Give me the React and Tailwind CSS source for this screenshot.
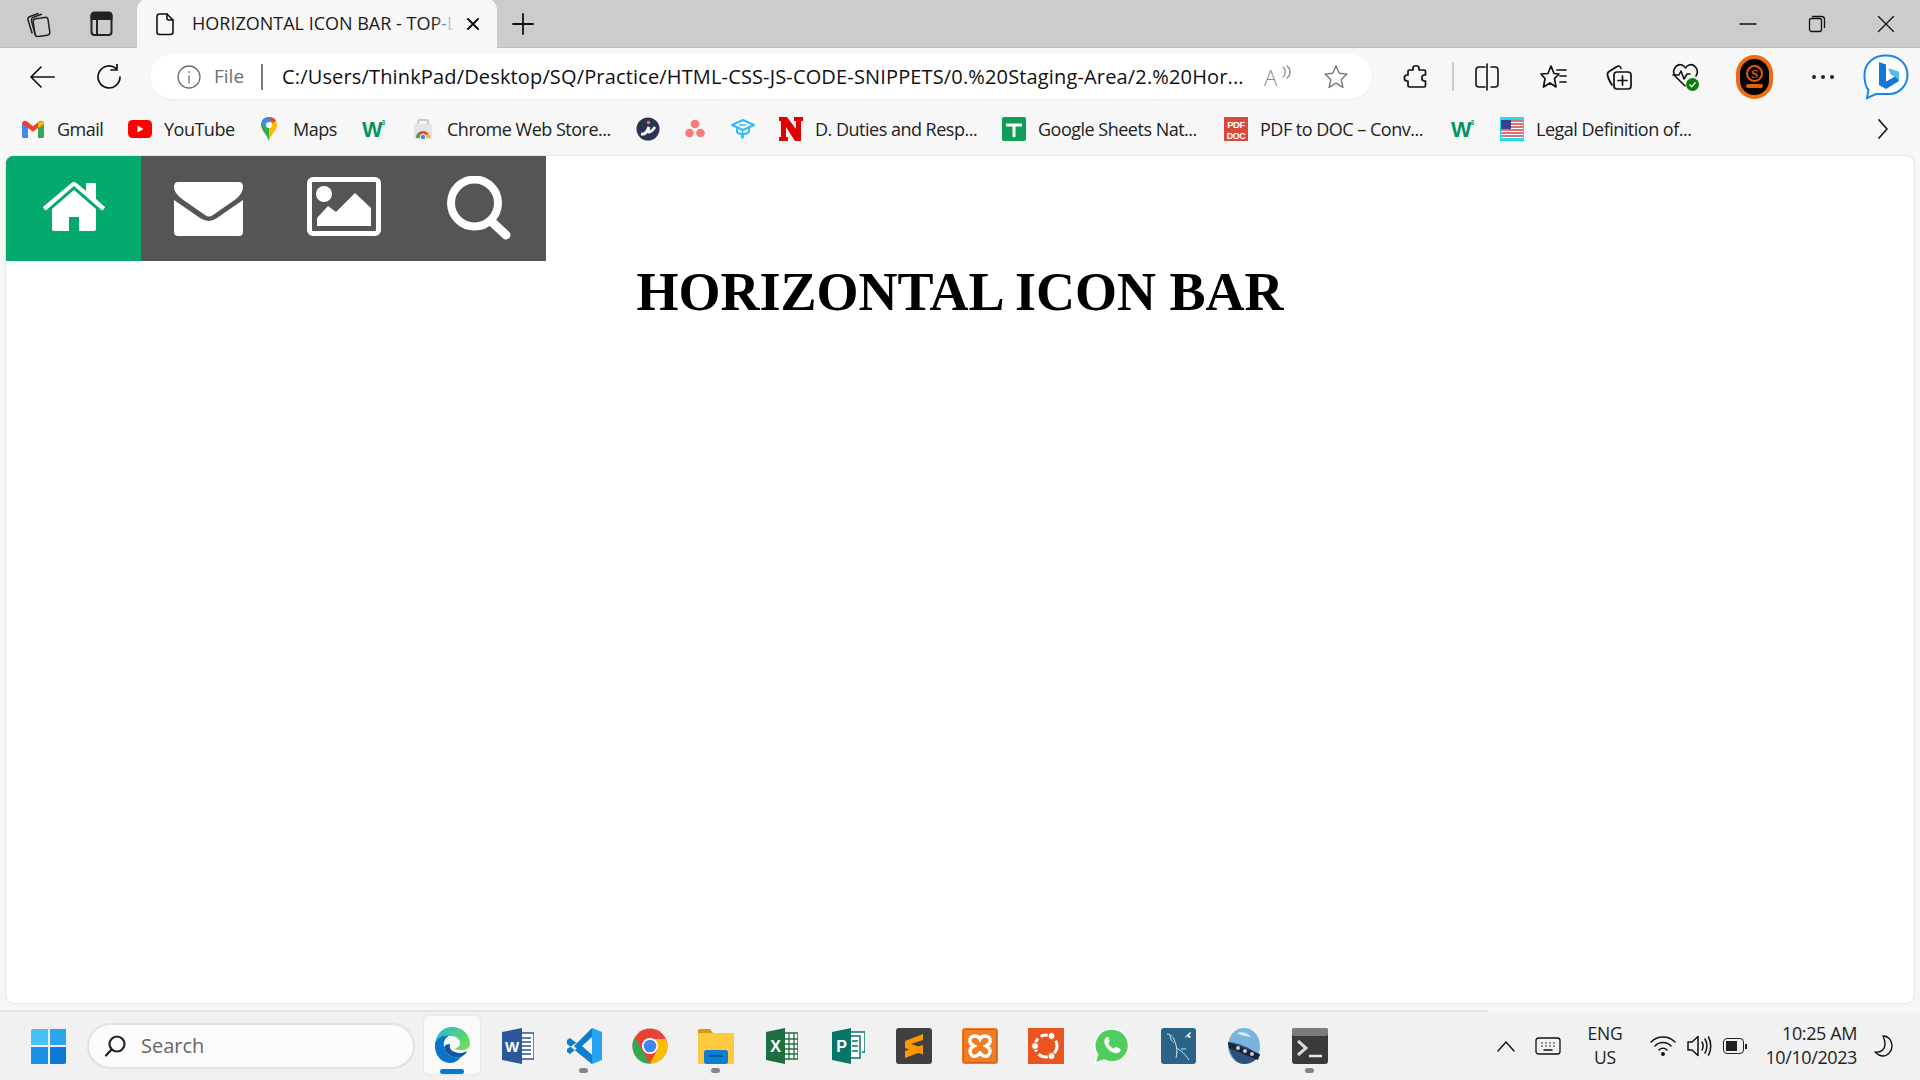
import React from "react";

const S = ({ w = 24, h = 24, vb, children, sw = 1.6, className = "" }) => (
  <svg width={w} height={h} viewBox={vb || `0 0 ${w} ${h}`} fill="none" stroke="currentColor" strokeWidth={sw} strokeLinecap="round" strokeLinejoin="round" className={"shrink-0 " + className}>
    {children}
  </svg>
);

const Logo = ({ children, vb = "0 0 24 24", w = 24, h = 24 }) => (
  <svg width={w} height={h} viewBox={vb} className="shrink-0">{children}</svg>
);

const Gmail = () => (
  <Logo>
    <path d="M1 21V6l6 4v11H2.500A1.500 1.500 0 0 1 1 19.500z" fill="#4285f4" />
    <path d="M23 21V6l-6 4v11h4.500a1.500 1.500 0 0 0 1.500-1.500z" fill="#34a853" />
    <path d="M1 7C1 4 4 3 6 4.500l6 4.800 6-4.800C20 3 23 4 23 7l-6 4-5 3.800L7 11z" fill="#ea4335" />
    <path d="M17 6 20 4 23 6 23 7 17 11z" fill="#fbbc04" />
  </Logo>
);
const YouTube = () => (
  <Logo>
    <rect x="0" y="3" width="24" height="18" rx="4.500" fill="#f00" />
    <path d="M9.500 8.500v7l6-3.500z" fill="#fff" />
  </Logo>
);
const Maps = () => (
  <Logo>
    <path d="M12 0C7 0 4 3.600 4 8c0 5 5 8 8 16z" fill="#34a853" />
    <path d="M12 0c5 0 8 3.600 8 8 0 5-5 8-8 16z" fill="#fbbc04" />
    <path d="M5 3.500C7 1 9.500 0 12 0l4 2-9 9z" fill="#4285f4" />
    <path d="M12 0c3.500 0 6 1.600 7 4l-4 2z" fill="#ea4335" />
    <circle cx="12" cy="8" r="3" fill="#fff" />
  </Logo>
);
const W3 = () => (
  <Logo>
    <text x="0" y="20" fontFamily="Liberation Sans" fontWeight="700" fontSize="22" fill="#04945f" textLength="20" lengthAdjust="spacingAndGlyphs">W</text>
    <text x="19.500" y="8" fontFamily="Liberation Sans" fontWeight="700" fontSize="6.500" fill="#04945f">3</text>
  </Logo>
);
const Store = () => (
  <Logo>
    <path d="M7 8V5a2 2 0 0 1 2-2h6a2 2 0 0 1 2 2v3" fill="none" stroke="#c8c8c8" strokeWidth="2" />
    <rect x="3" y="7" width="18" height="15" fill="#e4e4e4" />
    <path d="M5 21a7 7 0 0 1 14 0z" fill="#ea4335" />
    <path d="M5 21a7 7 0 0 1 3-5.700l4 5.700z" fill="#34a853" />
    <path d="M12 21l7 0a7 7 0 0 0-2-4.800z" fill="#fbbc04" />
    <circle cx="12" cy="20" r="2.800" fill="#4285f4" stroke="#fff" />
  </Logo>
);
const ICircle = () => (
  <Logo>
    <circle cx="12" cy="12" r="11.500" fill="#2a3352" />
    <circle cx="12.500" cy="5.500" r="1.700" fill="#ed7a4a" />
    <path d="M5 17c3 .5 5-1 6-3l2-4c-1 3-1 5 0 5 2 0 4-2 6-5" fill="none" stroke="#fff" strokeWidth="2.800" />
  </Logo>
);
const Asana = () => (
  <Logo>
    <circle cx="12" cy="7" r="4.300" fill="#fb7a78" />
    <circle cx="6.500" cy="16" r="4.300" fill="#fb7a78" />
    <circle cx="17.500" cy="16" r="4.300" fill="#fb7a78" />
  </Logo>
);
const Grad = () => (
  <Logo>
    <path d="M1 8l11-5 11 5-11 5z" fill="none" stroke="#2fbdf2" strokeWidth="2" strokeLinejoin="round" />
    <path d="M6 11v4c2 3 9 3 12 0v-4" fill="none" stroke="#2fbdf2" strokeWidth="2" />
    <path d="M11 14c-1 3-2 5 0 8 3 0 2-5 1-8z" fill="#2fbdf2" />
    <path d="M8 8h7" stroke="#2fbdf2" strokeWidth="1.500" />
  </Logo>
);
const NLogo = () => (
  <Logo>
    <path d="M0 0h8l9 12V4h-2V0h9v4h-2v20h-6L7 10v10h2v4H0v-4h2V4H0z" fill="#e00000" />
  </Logo>
);
const Sheets = () => (
  <Logo>
    <rect x="0" y="0" width="24" height="24" rx="2" fill="#0f9d58" />
    <path d="M4 8h16M12 8v12" stroke="#fff" strokeWidth="3" />
  </Logo>
);
const Pdf = () => (
  <Logo>
    <rect x="0" y="0" width="24" height="24" fill="#d9493c" />
    <text x="12" y="10.500" textAnchor="middle" fontFamily="Liberation Sans" fontWeight="700" fontSize="9.500" fill="#fff">PDF</text>
    <text x="12" y="21.500" textAnchor="middle" fontFamily="Liberation Sans" fontWeight="700" fontSize="9" fill="#fff">DOC</text>
  </Logo>
);
const Flag = () => (
  <Logo>
    <rect x="0" y="0" width="24" height="24" fill="#19dff0" />
    <rect x="1" y="3" width="22" height="18" fill="#fff" />
    <path d="M1 4h22M1 7h22M1 10h22M1 13h22M1 16h22M1 19h22" stroke="#d2404a" strokeWidth="1.600" />
    <rect x="1" y="3" width="10" height="9" fill="#3a3f8f" />
  </Logo>
);

const Bookmark = ({ icon, text, className }) => (
  <div className={"flex items-center gap-3 shrink-0 " + className}>
    {icon}
    {text && <span className="whitespace-nowrap">{text}</span>}
  </div>
);

const Edge = () => (
  <Logo w={36} h={36} vb="0 0 36 36">
    <defs>
      <linearGradient id="e1" x1="0" y1="0" x2="1" y2="0.600"><stop offset="0" stopColor="#1fb6dc" /><stop offset="1" stopColor="#6cdc5a" /></linearGradient>
    </defs>
    <path d="M1 17C2 7 9 0 18 0c10 0 18 7 18 17 0 4-4 6-9 6-4 0-6-1-6-2 3 0 5-2 5-5 0-4-4-7-9-7-7 0-15 2-16 8z" fill="url(#e1)" />
    <path d="M1 17c1-6 8-9 14-8-4 2-6 6-5 11 1 7 9 12 17 10-3 4-7 6-11 6C7 36 0 27 1 17z" fill="#0c74c8" />
    <path d="M10 20c1 7 9 12 17 10 2-1 5-3 6-6-3 2-8 3-12 1-4-1-6-4-5-8-3 0-5 1-6 3z" fill="#0b5aa5" />
  </Logo>
);
const Word = () => (
  <Logo w={32} h={36} vb="0 0 32 36">
    <rect x="12" y="5" width="20" height="26" fill="#fff" stroke="#2b579a" strokeWidth="1.500" />
    <path d="M20 10h9M20 14h9M20 18h9M20 22h9M20 26h9" stroke="#2b579a" strokeWidth="1.500" />
    <path d="M0 4 20 0v36L0 32z" fill="#2b579a" />
    <text x="10" y="24" textAnchor="middle" fontFamily="Liberation Sans" fontWeight="700" fontSize="15" fill="#fff">W</text>
  </Logo>
);
const VSCode = () => (
  <Logo w={36} h={36} vb="0 0 36 36">
    <path d="M26 0 36 4v28l-10 4z" fill="#24a3f2" />
    <path d="M26 0 8 18l18 18 0-9-10-9 10-9z" fill="#0a7fd1" />
    <path d="M1 12l3-2 22 17v9L1 16zM1 24l3 2L14 18l-4-3-9 6z" fill="#0f7fcc" />
  </Logo>
);
const Chrome = () => (
  <Logo w={36} h={36} vb="0 0 36 36">
    <circle cx="18" cy="18" r="17.500" fill="#ea4335" />
    <path d="M3 9 11 24l7 11.500C8 36 .5 28 .5 18 .5 14.500 1.500 11.500 3 9z" fill="#34a853" />
    <path d="M18 11h15.500C35 14 35.500 16 35.500 18c0 10-8 17.500-17.500 17.500L25 22z" fill="#fbbc04" />
    <circle cx="18" cy="18" r="8" fill="#fff" />
    <circle cx="18" cy="18" r="6.300" fill="#4285f4" />
  </Logo>
);
const Folder = () => (
  <Logo w={36} h={36} vb="0 0 36 36">
    <path d="M0 3a2 2 0 0 1 2-2h10l3 4h21v4H0z" fill="#d99a0b" />
    <rect x="0" y="5" width="36" height="31" rx="1" fill="#ffca3e" />
    <rect x="6" y="22" width="24" height="14" rx="2.500" fill="#0f7fd0" />
    <path d="M11 28h14" stroke="#0a4e8c" strokeWidth="1.500" />
  </Logo>
);
const Excel = () => (
  <Logo w={32} h={36} vb="0 0 32 36">
    <rect x="13" y="5" width="19" height="26" fill="#fff" stroke="#1d6f42" strokeWidth="1.500" />
    <path d="M23 5v26M28 5v26M19 11h13M19 16h13M19 21h13M19 26h13" stroke="#1d6f42" strokeWidth="1.300" />
    <path d="M0 4 19 0v36L0 32z" fill="#1d6f42" />
    <text x="9.500" y="24" textAnchor="middle" fontFamily="Liberation Sans" fontWeight="700" fontSize="16" fill="#fff">X</text>
  </Logo>
);
const Project = () => (
  <Logo w={33} h={36} vb="0 0 33 36">
    <path d="M14 4h19v20h-3" fill="#fff" stroke="#077568" strokeWidth="1.500" />
    <rect x="12" y="8" width="16" height="22" fill="#fff" stroke="#077568" strokeWidth="1.500" />
    <path d="M20 13h6M20 18h6M20 23h6" stroke="#077568" strokeWidth="1.500" />
    <path d="M0 4 19 0v36L0 32z" fill="#077568" />
    <text x="9.500" y="24" textAnchor="middle" fontFamily="Liberation Sans" fontWeight="700" fontSize="16" fill="#fff">P</text>
  </Logo>
);
const Sublime = () => (
  <Logo w={36} h={36} vb="0 0 36 36">
    <rect x="0" y="0" width="36" height="36" rx="3" fill="#404040" />
    <path d="M27 6 9 13v7l18 6.500v-6.500L15 16l12-4z" fill="#ff9800" />
    <path d="M9 23 27 17v6L9 30z" fill="#ff9800" />
  </Logo>
);
const Xampp = () => (
  <Logo w={36} h={36} vb="0 0 36 36">
    <rect x="0" y="0" width="36" height="36" rx="3" fill="#f07c24" />
    <rect x="1.500" y="1.500" width="33" height="33" rx="2" fill="none" stroke="#c9601a" />
    <path d="M13 8c-4 0-6 3-5 6 .5 2 2 3 4 4-2 1-4 2-4 5 0 4 3 6 6 5 2-.5 3-2 4-3 1 1 2 2.500 4 3 3 1 6-1 6-5 0-3-2-4-4-5 2-1 3.500-2 4-4 1-3-1-6-5-6-2 0-4 1-5 3-1-2-3-3-5-3z" fill="none" stroke="#fff" strokeWidth="3.400" />
  </Logo>
);
const Ubuntu = () => (
  <Logo w={36} h={36} vb="0 0 36 36">
    <rect x="0" y="0" width="36" height="36" fill="#e95420" />
    <circle cx="18" cy="18" r="11" fill="none" stroke="#fff" strokeWidth="3" strokeDasharray="14 3.300" strokeDashoffset="6" />
    <circle cx="7" cy="18" r="3.500" fill="#fff" stroke="#e95420" />
    <circle cx="23.500" cy="8" r="3.500" fill="#fff" stroke="#e95420" />
    <circle cx="23.500" cy="28" r="3.500" fill="#fff" stroke="#e95420" />
  </Logo>
);
const WhatsApp = () => (
  <Logo w={36} h={36} vb="0 0 36 36">
    <path d="M18 1a16.500 16.500 0 0 1 0 33c-3 0-5.500-.7-8-2L1 35l2.500-8.500A16.500 16.500 0 0 1 18 1z" fill="#4fce5d" stroke="#fff" strokeWidth="1.500" />
    <path d="M13 9c-2 1-3.500 3-2.500 6 1.500 5 5 8.500 10 10 3 1 5-.5 6-2.500.3-1 0-1.500-.7-2l-3.300-1.500c-.7-.3-1.200 0-1.700.6l-1 1.200c-2.500-1-4.500-3-5.600-5.500l1-1.100c.5-.5.6-1 .3-1.700L14.500 9.500C14.200 9 13.700 8.800 13 9z" fill="#fff" />
  </Logo>
);
const MySql = () => (
  <Logo w={35} h={36} vb="0 0 35 36">
    <rect x="0" y="0" width="35" height="36" rx="3" fill="#2a6288" />
    <path d="M6 6c3 0 5 2 7 5 2 5 3 9 3 14M9 7c0 4 2 6 4 8M15 20c5 2 9 6 13 12M16 24l-1 6M20 21l5 0" fill="none" stroke="#cfe0ea" strokeWidth="1" />
    <path d="M24 9l5-5 1 1-2 2 2 2-2 1-2-2-2 2z" fill="#fff" />
  </Logo>
);
const Obs = () => (
  <Logo w={34} h={36} vb="0 0 34 36">
    <ellipse cx="17" cy="18" rx="16" ry="18" fill="#7ab4de" />
    <path d="M1 14c8 0 20 5 32 13-4 6-10 9-16 9C8 36 2 26 1 14z" fill="#2d4f80" />
    <path d="M1 14l32 12-2 6L2 20z" fill="#1d2430" />
    <circle cx="11" cy="20" r="2" fill="#ccc" />
    <circle cx="18" cy="23" r="2" fill="#ccc" />
    <circle cx="25" cy="26" r="2" fill="#ccc" />
    <path d="M10 5c5-2 11 0 14 4-5-1-10-1-14-4z" fill="#d9ecf8" />
  </Logo>
);
const Terminal = () => (
  <Logo w={36} h={36} vb="0 0 36 36">
    <rect x="0" y="0" width="36" height="36" rx="3" fill="#3a3a3a" />
    <rect x="0" y="0" width="36" height="8" rx="2" fill="#7c7c7c" />
    <path d="M6 13l8 7-8 7" fill="none" stroke="#d8d8d8" strokeWidth="3" />
    <path d="M17 28h13" stroke="#e8e8e8" strokeWidth="2.500" />
  </Logo>
);

const Slot = ({ children, dot, className = "" }) => (
  <div className={"relative w-[66px] h-full flex items-center justify-center shrink-0 " + className}>
    {children}
    {dot && <span className="absolute bottom-[7px] left-[28px] w-[9px] h-[5px] rounded-full bg-[#858585]" />}
  </div>
);

export default function App() {
  return (
    <div className="w-[1920px] h-[1080px] overflow-hidden flex flex-col bg-[#f7f7f7] text-[#111] font-['Open_Sans',sans-serif]">
      {/* title bar */}
      <div className="h-[48px] shrink-0 bg-[#cccccc] flex items-end border-b border-[#bdbdbd]">
        <div className="w-[137px] h-full flex items-center shrink-0 text-[#222]">
          <S w={28} h={28} vb="0 0 28 28" sw={1.500} className="ml-[24px]">
            <rect x="10" y="8" width="15" height="18" rx="3" transform="rotate(-8 17 17)" />
            <path d="M8 23 4 10c-.5-2 .5-3 2-3.500l8-3M11 24 7.500 11c-.4-2 .6-3.200 2-3.700l8-3" />
          </S>
          <S w={24} h={28} vb="0 0 24 28" sw={2} className="ml-[37px]">
            <rect x="2.500" y="3" width="20" height="22" rx="3" />
            <path d="M2.500 5.500a3 3 0 0 1 3-3h14a3 3 0 0 1 3 3V9h-20z" fill="currentColor" />
            <path d="M8 9v16" />
          </S>
        </div>
        <div className="relative w-[360px] h-[49px] -mb-px shrink-0 bg-[#f7f7f7] rounded-t-[10px] flex items-center">
          <S w={20} h={24} vb="0 0 20 24" sw={1.600} className="ml-[18px]">
            <path d="M4 2h8l6 6v12a2.500 2.500 0 0 1-2.500 2.500h-11A2.500 2.500 0 0 1 2 20V4.500A2.500 2.500 0 0 1 4 2z" />
            <path d="M12 2v4.500A1.500 1.500 0 0 0 13.500 8H18" />
          </S>
          <div className="ml-[17px] w-[263px] overflow-hidden whitespace-nowrap text-[18px] text-[#1a1a1a] relative">
            HORIZONTAL ICON BAR - TOP-L
            <span className="absolute right-0 top-0 bottom-0 w-[22px] bg-gradient-to-r from-[#f7f7f700] to-[#f7f7f7]" />
          </div>
          <S w={14} h={14} vb="0 0 14 14" sw={2} className="ml-[11px]">
            <path d="M2 2l10 10M12 2 2 12" />
          </S>
        </div>
        <div className="flex-1 h-full flex items-center relative">
          <S w={24} h={24} vb="0 0 24 24" sw={1.800} className="ml-[14px]">
            <path d="M12 2v20M2 12h20" />
          </S>
          <div className="ml-auto flex items-center">
            <S w={18} h={18} vb="0 0 18 18" sw={1.300} className="mr-[51px]">
              <path d="M1 9h16" />
            </S>
            <S w={18} h={18} vb="0 0 18 18" sw={1.300} className="mr-[51px]">
              <rect x="1.500" y="3.500" width="12" height="13" rx="2" />
              <path d="M4.500 1.500h9a3 3 0 0 1 3 3v8" />
            </S>
            <S w={18} h={18} vb="0 0 18 18" sw={1.300} className="mr-[25px]">
              <path d="M1.500 1.500l15 15M16.500 1.500l-15 15" />
            </S>
          </div>
        </div>
      </div>

      {/* toolbar */}
      <div className="h-[57px] shrink-0 flex items-center">
        <S w={26} h={26} vb="0 0 26 26" sw={1.700} className="ml-[29px]">
          <path d="M25 13H2M12 3 2 13l10 10" />
        </S>
        <S w={26} h={26} vb="0 0 26 26" sw={1.700} className="ml-[41px]">
          <path d="M20 4.500A11 11 0 1 0 24 13" />
          <path d="M21 0v6h-6" />
        </S>
        <div className="ml-[28px] w-[1222px] h-[45px] rounded-full bg-white flex items-center shrink-0 shadow-[0_1px_2px_rgba(0,0,0,0.06)]">
          <S w={24} h={24} vb="0 0 24 24" sw={1.300} className="ml-[27px] text-[#707070]">
            <circle cx="12" cy="12" r="11" />
            <path d="M12 11v7M12 6.500v1" />
          </S>
          <span className="ml-[13px] text-[19px] text-[#6f6f6f]">File</span>
          <span className="ml-[17px] w-[2px] h-[26px] bg-[#7a7a7a]" />
          <span className="ml-[19px] w-[985px] text-[20px] whitespace-nowrap overflow-hidden text-[#101010] tracking-[0.15px]">C:/Users/ThinkPad/Desktop/SQ/Practice/HTML-CSS-JS-CODE-SNIPPETS/0.%20Staging-Area/2.%20Hor...</span>
          <div className="relative w-[26px] h-[24px] -ml-[3px] shrink-0 text-[#8a8a8a]">
            <span className="text-[22px] leading-[24px] font-light">A</span>
            <S w={10} h={14} vb="0 0 10 14" sw={1.300} className="absolute -right-[2px] top-0">
              <path d="M1 2c3 2 3 8 0 10M5 1c4 3 4 9 0 12" />
            </S>
          </div>
          <S w={26} h={26} vb="0 0 26 26" sw={1.400} className="ml-[33px] text-[#777]">
            <path d="M13 2l3.300 7.300 7.700.8-5.800 5.300 1.700 8L13 19.200 6.100 23.400l1.700-8L2 10.100l7.700-.8z" />
          </S>
        </div>
        <S w={26} h={26} vb="0 0 26 26" sw={1.700} className="ml-[31px]">
          <path d="M10 4c0-3 6-3 6 0v2h5a1.500 1.500 0 0 1 1.500 1.500V11h-1c-3.500 0-3.500 6 0 6h1v4.500A1.500 1.500 0 0 1 21 23H6.500A1.500 1.500 0 0 1 5 21.500V17H4c-3.500 0-3.500-6 0-6h1V7.500A1.500 1.500 0 0 1 6.500 6H10z" />
        </S>
        <span className="ml-[23px] w-[2px] h-[29px] bg-[#cdcdcd]" />
        <S w={26} h={28} vb="0 0 26 28" sw={1.600} className="ml-[20px]">
          <path d="M11 4H5a3 3 0 0 0-3 3v14a3 3 0 0 0 3 3h6M17 4h4a3 3 0 0 1 3 3v14a3 3 0 0 1-3 3h-4M13 1v26" />
        </S>
        <S w={28} h={28} vb="0 0 28 28" sw={1.700} className="ml-[40px]">
          <path d="M11 3 14 10.500 19 11 14.500 15.500 16 24 10 20 3.500 24 5 15.500 1 11 8 10.500z" />
          <path d="M17 7h9M20 13h6M20 19h6" />
        </S>
        <S w={28} h={28} vb="0 0 28 28" sw={1.700} className="ml-[37px]">
          <rect x="9" y="9" width="17" height="17" rx="3" />
          <path d="M17.500 13v9M13 17.500h9M7 22c-2-3-4-7-4.500-10-.3-2 .5-3 2-3.800L12 3.500c2-1 3.500 0 4 2" />
        </S>
        <div className="relative w-[27px] h-[30px] ml-[39px] shrink-0">
          <S w={27} h={27} vb="0 0 27 27" sw={1.600}>
            <path d="M13 24 3 14C-1 8 5 1 10 3c2 .8 3 2 3.500 3 .5-1 1.500-2.200 3.500-3 5-2 11 5 7 11" />
            <path d="M1 13h6l2-4 3 8 3-5h3" />
          </S>
          <span className="absolute right-0 bottom-[1px] w-[13px] h-[13px] rounded-full bg-[#107c10] flex items-center justify-center">
            <svg width="9" height="9" viewBox="0 0 9 9" fill="none" stroke="#fff" strokeWidth="1.400"><path d="M1.500 4.500 3.700 6.700 7.500 2.500" /></svg>
          </span>
        </div>
        <div className="ml-[37px] w-[37px] h-[44px] rounded-full bg-[#f06a10] flex items-center justify-center shrink-0">
          <div className="w-[29px] h-[36px] rounded-full bg-black flex flex-col items-center justify-center">
            <span className="w-[17px] h-[17px] rounded-full border-2 border-[#e25c10] flex items-center justify-center font-['Liberation_Serif',serif] font-bold text-[13px] leading-none text-[#e25c10]">S</span>
            <span className="w-[17px] h-[4px] mt-[2px] rounded-full bg-[#e25c10]" />
          </div>
        </div>
        <div className="ml-[39px] flex gap-[5px] shrink-0 w-[23px]">
          <span className="w-[4px] h-[4px] rounded-full bg-[#222]" />
          <span className="w-[4px] h-[4px] rounded-full bg-[#222]" />
          <span className="w-[4px] h-[4px] rounded-full bg-[#222]" />
        </div>
        <svg width="46" height="46" viewBox="0 0 46 46" className="ml-[28px] shrink-0">
          <path d="M23 1.500C35 1.500 44.500 9 44.500 21c0 10-8 19-18 19H13l-9 4 1.500-8C2 32 1.500 27 1.500 21 1.500 9 11 1.500 23 1.500z" fill="#fff" stroke="#1a86e8" strokeWidth="2" />
          <path d="M16 8l7 2.500v17l9-5-4-2-2.500-6L36 18v9L23 35l-7-4z" fill="#1478d4" />
          <path d="M25.500 14.500 36 18v9l-4-4.500-4-2z" fill="#4fc0ee" />
        </svg>
      </div>

      {/* bookmarks */}
      <div className="h-[51px] shrink-0 pb-[3px] flex items-center pl-[21px] text-[18px] text-[#222] tracking-[-0.5px]">
        <Bookmark icon={<Gmail />} text="Gmail" className="w-[107px]" />
        <Bookmark icon={<YouTube />} text="YouTube" className="w-[129px]" />
        <Bookmark icon={<Maps />} text="Maps" className="w-[105px]" />
        <Bookmark icon={<W3 />} className="w-[49px]" />
        <Bookmark icon={<Store />} text="Chrome Web Store..." className="w-[225px]" />
        <Bookmark icon={<ICircle />} className="w-[47px]" />
        <Bookmark icon={<Asana />} className="w-[48px]" />
        <Bookmark icon={<Grad />} className="w-[48px]" />
        <Bookmark icon={<NLogo />} text="D. Duties and Resp..." className="w-[223px]" />
        <Bookmark icon={<Sheets />} text="Google Sheets Nat..." className="w-[222px]" />
        <Bookmark icon={<Pdf />} text="PDF to DOC – Conv..." className="w-[227px]" />
        <Bookmark icon={<W3 />} className="w-[49px]" />
        <Bookmark icon={<Flag />} text="Legal Definition of..." className="w-[377px]" />
        <S w={12} h={22} vb="0 0 12 22" sw={1.800}>
          <path d="M2 2l8 9-8 9" />
        </S>
      </div>

      {/* page */}
      <div className="h-[847px] shrink-0 mx-[6px] bg-white rounded-lg shadow-[0_0_2px_rgba(0,0,0,0.25)] overflow-hidden">
        <div className="flex w-[540px] h-[105px] bg-[#555555]">
          <div className="w-[135px] h-full bg-[#04AA6D] flex items-center justify-center text-white">
            <svg width="62" height="49" viewBox="0 0 62 49" fill="#fff" className="-mt-[4px]">
              <path d="M28.500 1a4 4 0 0 1 5 0L43 9V2a1 1 0 0 1 1-1h8a1 1 0 0 1 1 1v15l8.500 7.500a1 1 0 0 1 .1 1.400L60 28a1 1 0 0 1-1.400.1L31 4 3.400 28.100A1 1 0 0 1 2 28L.4 25.900a1 1 0 0 1 .1-1.400z" />
              <path d="M31 8 53 27v20a2 2 0 0 1-2 2H36V35H26v14H11a2 2 0 0 1-2-2V27z" />
            </svg>
          </div>
          <div className="w-[135px] h-full flex items-center justify-center">
            <svg width="69" height="54" viewBox="0 0 69 54" fill="#fff">
              <path d="M4 0H65Q69 0 69 5Q69 11 62 17L39 33Q35 36 31 33L8 17Q0 11 0 5Q0 0 4 0Z" />
              <path d="M0 18 26 36Q35 42 43 36L69 18V50Q69 54 65 54H4Q0 54 0 50Z" />
            </svg>
          </div>
          <div className="w-[135px] h-full flex items-center justify-center">
            <svg width="74" height="59" viewBox="0 0 74 59" fill="#fff" className="-mt-[4px]">
              <rect x="2.500" y="2.500" width="69" height="54" rx="3.500" fill="none" stroke="#fff" strokeWidth="5" />
              <circle cx="17" cy="17" r="8" />
              <path d="M10 49V41L21 29 29 35 48 16 64 31V49Z" />
            </svg>
          </div>
          <div className="w-[135px] h-full flex items-center justify-center">
            <svg width="65" height="64" viewBox="0 0 65 64" fill="none" stroke="#fff" strokeLinecap="round" className="ml-[1px] -mt-[2px]">
              <circle cx="27.500" cy="27" r="23.500" strokeWidth="8" />
              <path d="M45 46 59 59" strokeWidth="9" />
            </svg>
          </div>
        </div>
        <h1 className="text-center font-['Liberation_Serif',serif] font-bold text-[54px] leading-[60px] mt-px text-black">HORIZONTAL ICON BAR</h1>
      </div>

      {/* taskbar */}
      <div className="h-[9px] shrink-0 flex items-end">
        <div className="w-[1488px] h-[2px] bg-[#e4e4e4]" />
      </div>
      <div className="flex-1 bg-[#f1f1f1] flex items-center relative">
        <div className="ml-[31px] w-[35px] h-[35px] grid grid-cols-2 grid-rows-2 gap-[2px] shrink-0">
          <span className="bg-[#49c0f4] rounded-tl-[2px]" />
          <span className="bg-[#2da4ec]" />
          <span className="bg-[#1b90e4]" />
          <span className="bg-[#0a78d4] rounded-br-[2px]" />
        </div>
        <div className="ml-[21px] w-[328px] h-[46px] rounded-full bg-[#fbfbfb] border-2 border-[#e2e2e2] flex items-center shrink-0">
          <S w={24} h={24} vb="0 0 24 24" sw={2.200} className="ml-[14px] text-[#222]">
            <circle cx="14" cy="10" r="7.500" />
            <path d="M8.500 15.500 3 21.500" />
          </S>
          <span className="ml-[14px] text-[20px] text-[#666]">Search</span>
        </div>
        <div className="ml-[4px] h-full flex items-center">
          <Slot>
            <span className="absolute left-[5px] top-[4px] w-[56px] h-[58px] bg-[#f9f9f9] rounded-[5px] shadow-[0_0_2px_rgba(0,0,0,0.15)]" />
            <span className="relative -mt-[2px]"><Edge /></span>
            <span className="absolute left-[21px] bottom-[6px] w-[24px] h-[5px] rounded-full bg-[#0078d4]" />
          </Slot>
          <Slot><Word /></Slot>
          <Slot dot><VSCode /></Slot>
          <Slot><Chrome /></Slot>
          <Slot dot><Folder /></Slot>
          <Slot><Excel /></Slot>
          <Slot><Project /></Slot>
          <Slot><Sublime /></Slot>
          <Slot><Xampp /></Slot>
          <Slot><Ubuntu /></Slot>
          <Slot><WhatsApp /></Slot>
          <Slot><MySql /></Slot>
          <Slot><Obs /></Slot>
          <Slot dot><Terminal /></Slot>
        </div>
        <S w={20} h={12} vb="0 0 20 12" sw={1.400} className="ml-[153px]">
          <path d="M2 11l8-9 8 9" />
        </S>
        <S w={26} h={20} vb="0 0 26 20" sw={1.300} className="ml-[19px]">
          <rect x="1" y="2" width="24" height="16" rx="2.500" />
          <path d="M7 7h0M11 7h0M15 7h0M19 7h0M7 10h0M11 10h0M15 10h0M19 10h0M9 14h8" strokeWidth="1.500" />
        </S>
        <div className="ml-[24px] -mt-[2px] w-[40px] text-center text-[17.500px] leading-[24px] tracking-[-0.2px] text-[#222] shrink-0">
          <div>ENG</div>
          <div>US</div>
        </div>
        <S w={26} h={22} vb="0 0 26 22" sw={1.500} className="ml-[25px]">
          <path d="M1 7a17 17 0 0 1 24 0M5 11a11 11 0 0 1 16 0M9 15a5.500 5.500 0 0 1 8 0" />
          <circle cx="13" cy="19" r="1.200" fill="currentColor" />
        </S>
        <S w={26} h={24} vb="0 0 26 24" sw={1.500} className="ml-[10px]">
          <path d="M2 8h4l6-5.500v19L6 16H2z" />
          <path d="M16 8c1.500 2 1.500 6 0 8M19 5c2.500 4 2.500 10 0 14M22.500 3c3 5 3 13 0 18" />
        </S>
        <div className="ml-[11px] relative w-[25px] h-[18px] flex items-center shrink-0">
          <div className="w-[21px] h-[16px] rounded-[4px] border-[1.500px] border-[#222] p-[2px]">
            <div className="w-[11px] h-full bg-[#222]" />
          </div>
          <span className="ml-px w-[2px] h-[5px] bg-[#222]" />
        </div>
        <div className="ml-[17px] -mt-[2px] w-[92px] text-right text-[18px] leading-[24px] tracking-[-0.4px] text-[#222] whitespace-nowrap shrink-0">
          <div>10:25 AM</div>
          <div>10/10/2023</div>
        </div>
        <S w={20} h={24} vb="0 0 20 24" sw={1.400} className="ml-[16px]">
          <path d="M10 2c6 0 9 5 9 10 0 5-4 10-9 10-3 0-6-2-8-4 5 1 10-2 10-8 0-3-1-6-2-8z" />
        </S>
      </div>
    </div>
  );
}
